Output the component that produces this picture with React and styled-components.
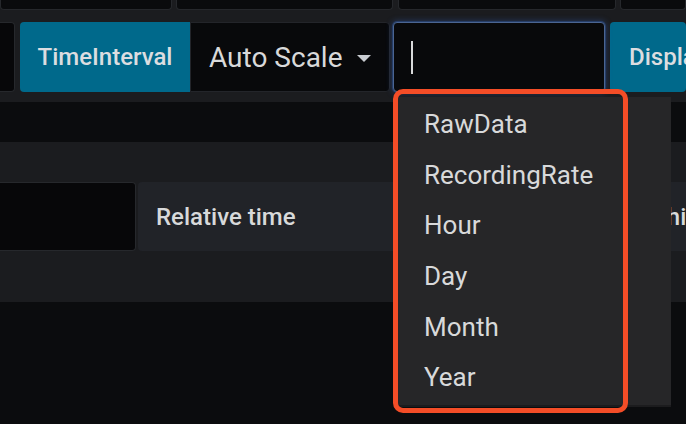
import React from "react";
import styled, { createGlobalStyle } from "styled-components";

const Global = createGlobalStyle`
  html, body {
    margin: 0;
    padding: 0;
    background: #0b0c0e;
    overflow: hidden;
  }
  body {
    font-family: Roboto, "Noto Sans", "Liberation Sans", sans-serif;
    color: #d8d9da;
  }
  * { box-sizing: border-box; }
`;

const Page = styled.div`
  width: 686px;
  height: 424px;
  display: flex;
  flex-direction: column;
  background: #0b0c0e;
  overflow: hidden;
  position: relative;
`;

const Panel = styled.section`
  background: #1b1c1f;
  display: flex;
  flex-direction: column;
  padding-bottom: ${(p) => p.$padBottom}px;
  padding-top: ${(p) => p.$padTop}px;
`;

const DarkGap = styled.div`
  height: ${(p) => p.$h}px;
  flex: none;
`;

const TopStrip = styled.div`
  height: 10px;
  display: flex;
  gap: 4px;
  margin-bottom: 12px;
`;

const StripBox = styled.div`
  width: ${(p) => p.$w}px;
  flex: ${(p) => (p.$grow ? "1" : "none")};
  height: 100%;
  background: #0a0b0d;
  border: 1px solid #26282c;
  border-top: none;
  border-radius: 0 0 4px 4px;
  margin-left: ${(p) => p.$ml || 0}px;
`;

const Row = styled.div`
  display: flex;
  align-items: stretch;
  height: ${(p) => p.$h}px;
`;

const Stub = styled.div`
  width: ${(p) => p.$w}px;
  flex: none;
  background: #070709;
  border: 1px solid #26282c;
  border-left: none;
  border-radius: 0 4px 4px 0;
  margin-right: ${(p) => p.$mr}px;
`;

const BlueLabel = styled.div`
  width: ${(p) => (p.$w ? `${p.$w}px` : "auto")};
  flex: ${(p) => (p.$w ? "none" : "1")};
  background: #00698b;
  border-radius: ${(p) => (p.$joined ? "4px 0 0 4px" : "4px")};
  display: flex;
  align-items: center;
  justify-content: ${(p) => (p.$w ? "center" : "flex-start")};
  padding-left: ${(p) => (p.$w ? 0 : 19)}px;
  font-size: 24px;
  font-weight: 500;
  color: #dcdde0;
  white-space: nowrap;
  overflow: hidden;
`;

const GrayLabel = styled.div`
  width: ${(p) => (p.$w ? `${p.$w}px` : "auto")};
  flex: ${(p) => (p.$w ? "none" : "1")};
  background: #212328;
  border-radius: 4px 0 0 4px;
  display: flex;
  align-items: center;
  padding-left: 18px;
  font-size: 24px;
  font-weight: 500;
  color: #d8d9da;
  white-space: nowrap;
  overflow: hidden;
`;

const Field = styled.div`
  width: ${(p) => p.$w}px;
  flex: none;
  background: #070709;
  border: 1px solid #26282c;
  border-radius: 0 4px 4px 0;
  margin-right: ${(p) => p.$mr || 0}px;
`;

const Select = styled.div`
  width: 200px;
  flex: none;
  background: #08090b;
  border: 1px solid #23252a;
  border-radius: 0 4px 4px 0;
  display: flex;
  align-items: center;
  gap: 14px;
  padding-left: 18px;
  font-size: 28px;
  color: #d8d9da;
  margin-right: 3px;
`;

const Caret = styled.svg`
  width: 14px;
  height: 7px;
  flex: none;
  margin-top: 2px;
`;

const InputWrap = styled.div`
  position: relative;
  width: 212px;
  flex: none;
  margin-right: 5px;
  display: flex;
`;

const Input = styled.div`
  flex: 1;
  background: #08090b;
  border: 1px solid #4b6591;
  border-radius: 4px;
  box-shadow: 0 0 0 1px rgba(45, 85, 150, 0.45), 0 0 6px 1px rgba(61, 113, 217, 0.35);
  display: flex;
  align-items: center;
  padding-left: 17px;
`;

const Cursor = styled.span`
  width: 2px;
  height: 33px;
  background: #d8d9da;
`;

const Menu = styled.ul`
  position: absolute;
  top: 75px;
  left: 5px;
  width: 273px;
  margin: 0;
  padding: 2px 0 2px 0;
  list-style: none;
  background: #262628;
  box-shadow: 0 2px 0 #1c1c1e;
  z-index: 2;
`;

const MenuItem = styled.li`
  height: 50.6px;
  display: flex;
  align-items: center;
  padding-left: 26px;
  font-size: 26px;
  color: #d8d9da;
  white-space: nowrap;
`;

const Highlight = styled.div`
  position: absolute;
  top: 67px;
  left: 0;
  width: 235px;
  height: 324px;
  border: 5.5px solid #f44d27;
  border-radius: 10px;
  z-index: 3;
  pointer-events: none;
`;

const options = ["RawData", "RecordingRate", "Hour", "Day", "Month", "Year"];

export default function App() {
  return (
    <Page>
      <Global />
      <Panel $padTop={0} $padBottom={10}>
        <TopStrip>
          <StripBox $w={172} />
          <StripBox $w={217} />
          <StripBox $w={218} $ml={1} />
          <StripBox $grow />
        </TopStrip>
        <Row $h={70}>
          <Stub $w={15} $mr={5} />
          <BlueLabel $w={170} $joined>TimeInterval</BlueLabel>
          <Select>
            <span>Auto Scale</span>
            <Caret viewBox="0 0 14 7">
              <path d="M0 0 L14 0 L7 7 Z" fill="#c9cdd2" />
            </Caret>
          </Select>
          <InputWrap>
            <Input>
              <Cursor />
            </Input>
            <Menu>
              {options.map((o) => (
                <MenuItem key={o}>{o}</MenuItem>
              ))}
            </Menu>
            <Highlight />
          </InputWrap>
          <BlueLabel>Display name</BlueLabel>
        </Row>
      </Panel>
      <DarkGap $h={40} />
      <Panel $padTop={40} $padBottom={51}>
        <Row $h={69}>
          <Stub $w={136} $mr={2} />
          <GrayLabel $w={260}>Relative time</GrayLabel>
          <Field $w={174} $mr={4} />
          <GrayLabel>Time shift</GrayLabel>
        </Row>
      </Panel>
    </Page>
  );
}
